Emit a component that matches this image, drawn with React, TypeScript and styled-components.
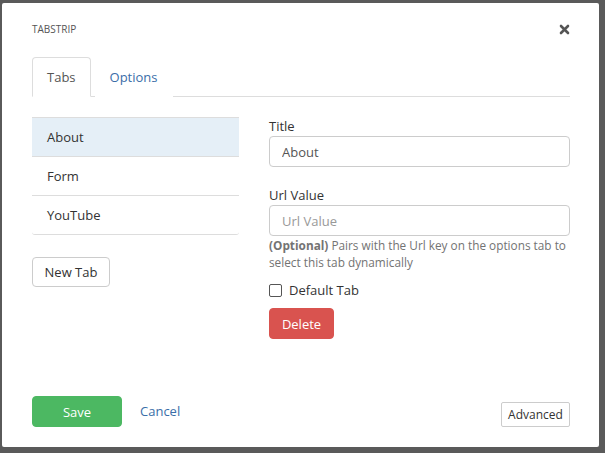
import React from "react";
import styled, { createGlobalStyle } from "styled-components";

const GlobalStyle = createGlobalStyle`
  html, body {
    margin: 0;
    width: 605px;
    height: 453px;
    overflow: hidden;
    background: #5a5a5a;
    font-family: "Open Sans", "Liberation Sans", sans-serif;
  }
  * {
    box-sizing: border-box;
  }
`;

const Backdrop = styled.div`
  position: relative;
  width: 605px;
  height: 453px;
  background: #5a5a5a;
`;

const Modal = styled.div`
  position: absolute;
  top: 3px;
  left: 2px;
  width: 597px;
  height: 444px;
  background: #fff;
  border-radius: 2px;
  display: flex;
  flex-direction: column;
  padding: 0 29px 20px 30px;
  color: #333;
  font-size: 13px;
`;

const Header = styled.div`
  display: flex;
  align-items: center;
  justify-content: space-between;
  height: 16px;
  margin-top: 18px;
  margin-bottom: 20px;
`;

const ModalTitle = styled.div`
  font-size: 10px;
  color: #555;
  text-transform: uppercase;
`;

const CloseButton = styled.button`
  border: 0;
  background: none;
  padding: 0;
  width: 12px;
  height: 12px;
  display: flex;
  align-items: center;
  justify-content: center;
  cursor: pointer;
`;

const TabNav = styled.div`
  display: flex;
  height: 40px;
  border-bottom: 1px solid #ddd;
`;

const Tab = styled.div<{ $active?: boolean }>`
  display: flex;
  align-items: center;
  padding: 0 14px;
  margin-right: 4px;
  margin-bottom: -1px;
  border: 1px solid ${(p) => (p.$active ? "#ddd" : "transparent")};
  border-bottom-color: ${(p) => (p.$active ? "#fff" : "transparent")};
  border-radius: 4px 4px 0 0;
  background: #fff;
  color: ${(p) => (p.$active ? "#555" : "#3a6ea8")};
  font-size: 13px;
`;

const Body = styled.div`
  flex: 1;
  display: flex;
  gap: 30px;
  padding-top: 20px;
`;

const LeftColumn = styled.div`
  width: 207px;
  display: flex;
  flex-direction: column;
  align-items: flex-start;
`;

const List = styled.div`
  width: 100%;
  display: flex;
  flex-direction: column;
  margin-bottom: 22px;
`;

const ListItem = styled.div<{ $active?: boolean }>`
  height: 39px;
  display: flex;
  align-items: center;
  padding-left: 15px;
  border-top: 1px solid #ddd;
  background: ${(p) => (p.$active ? "#e5eff7" : "#fff")};
  color: #333;
  &:last-child {
    height: 40px;
    border-bottom: 1px solid #ddd;
    border-radius: 0 0 3px 3px;
  }
`;

const Button = styled.button<{ $variant?: "default" | "danger" | "success" }>`
  font-family: inherit;
  font-size: 13px;
  height: 31px;
  padding: 0 14px;
  border-radius: 4px;
  border: 1px solid
    ${(p) =>
      p.$variant === "danger"
        ? "#d9534f"
        : p.$variant === "success"
        ? "#4cb862"
        : "#ccc"};
  background: ${(p) =>
    p.$variant === "danger"
      ? "#d9534f"
      : p.$variant === "success"
      ? "#4cb862"
      : "#fff"};
  color: ${(p) => (p.$variant && p.$variant !== "default" ? "#fff" : "#333")};
  cursor: pointer;
`;

const NewTabButton = styled(Button)`
  height: 30px;
  width: 78px;
  padding: 0;
`;

const RightColumn = styled.div`
  width: 301px;
  display: flex;
  flex-direction: column;
`;

const Field = styled.div<{ $gap?: number }>`
  display: flex;
  flex-direction: column;
  margin-bottom: ${(p) => p.$gap ?? 0}px;
`;

const Label = styled.label`
  font-size: 13px;
  line-height: 18px;
  margin-bottom: 1px;
  color: #333;
`;

const Input = styled.input`
  font-family: inherit;
  font-size: 13px;
  height: 31px;
  padding: 0 12px;
  border: 1px solid #ccc;
  border-radius: 4px;
  color: #555;
  outline: none;
  &::placeholder {
    color: #999;
  }
`;

const HelpText = styled.div`
  font-size: 11.8px;
  line-height: 17px;
  color: #737373;
  margin-top: 1px;
  b {
    font-weight: 700;
  }
`;

const CheckRow = styled.label`
  display: flex;
  align-items: center;
  gap: 7px;
  margin-top: 10px;
  height: 18px;
  font-size: 13px;
`;

const CheckBox = styled.span`
  width: 13px;
  height: 13px;
  border: 1px solid #555;
  border-radius: 2px;
  background: #fff;
`;

const DeleteButton = styled(Button)`
  margin-top: 9px;
  width: 65px;
  padding: 0;
`;

const Footer = styled.div`
  display: flex;
  align-items: flex-end;
`;

const SaveButton = styled(Button)`
  width: 90px;
  padding: 0;
`;

const CancelLink = styled.a`
  color: #3a6ea8;
  font-size: 13px;
  line-height: 31px;
  margin-left: 18px;
  text-decoration: none;
`;

const AdvancedButton = styled.button`
  margin-left: auto;
  font-family: inherit;
  font-size: 12px;
  height: 25px;
  width: 69px;
  padding: 0;
  border: 1px solid #ccc;
  border-radius: 2px;
  background: #fff;
  color: #333;
`;

const CloseIcon = () => (
  <svg width="11" height="11" viewBox="0 0 11 11">
    <path
      d="M2 2 L9 9 M9 2 L2 9"
      stroke="#555"
      strokeWidth="2.6"
      strokeLinecap="round"
    />
  </svg>
);

export default function App() {
  return (
    <>
      <GlobalStyle />
      <Backdrop>
        <Modal>
          <Header>
            <ModalTitle>Tabstrip</ModalTitle>
            <CloseButton>
              <CloseIcon />
            </CloseButton>
          </Header>
          <TabNav>
            <Tab $active>Tabs</Tab>
            <Tab>Options</Tab>
          </TabNav>
          <Body>
            <LeftColumn>
              <List>
                <ListItem $active>About</ListItem>
                <ListItem>Form</ListItem>
                <ListItem>YouTube</ListItem>
              </List>
              <NewTabButton>New Tab</NewTabButton>
            </LeftColumn>
            <RightColumn>
              <Field $gap={19}>
                <Label>Title</Label>
                <Input defaultValue="About" />
              </Field>
              <Field>
                <Label>Url Value</Label>
                <Input placeholder="Url Value" />
                <HelpText>
                  <b>(Optional)</b> Pairs with the Url key on the options tab to
                  select this tab dynamically
                </HelpText>
              </Field>
              <CheckRow>
                <CheckBox />
                Default Tab
              </CheckRow>
              <DeleteButton $variant="danger">Delete</DeleteButton>
            </RightColumn>
          </Body>
          <Footer>
            <SaveButton $variant="success">Save</SaveButton>
            <CancelLink href="#">Cancel</CancelLink>
            <AdvancedButton>Advanced</AdvancedButton>
          </Footer>
        </Modal>
      </Backdrop>
    </>
  );
}
